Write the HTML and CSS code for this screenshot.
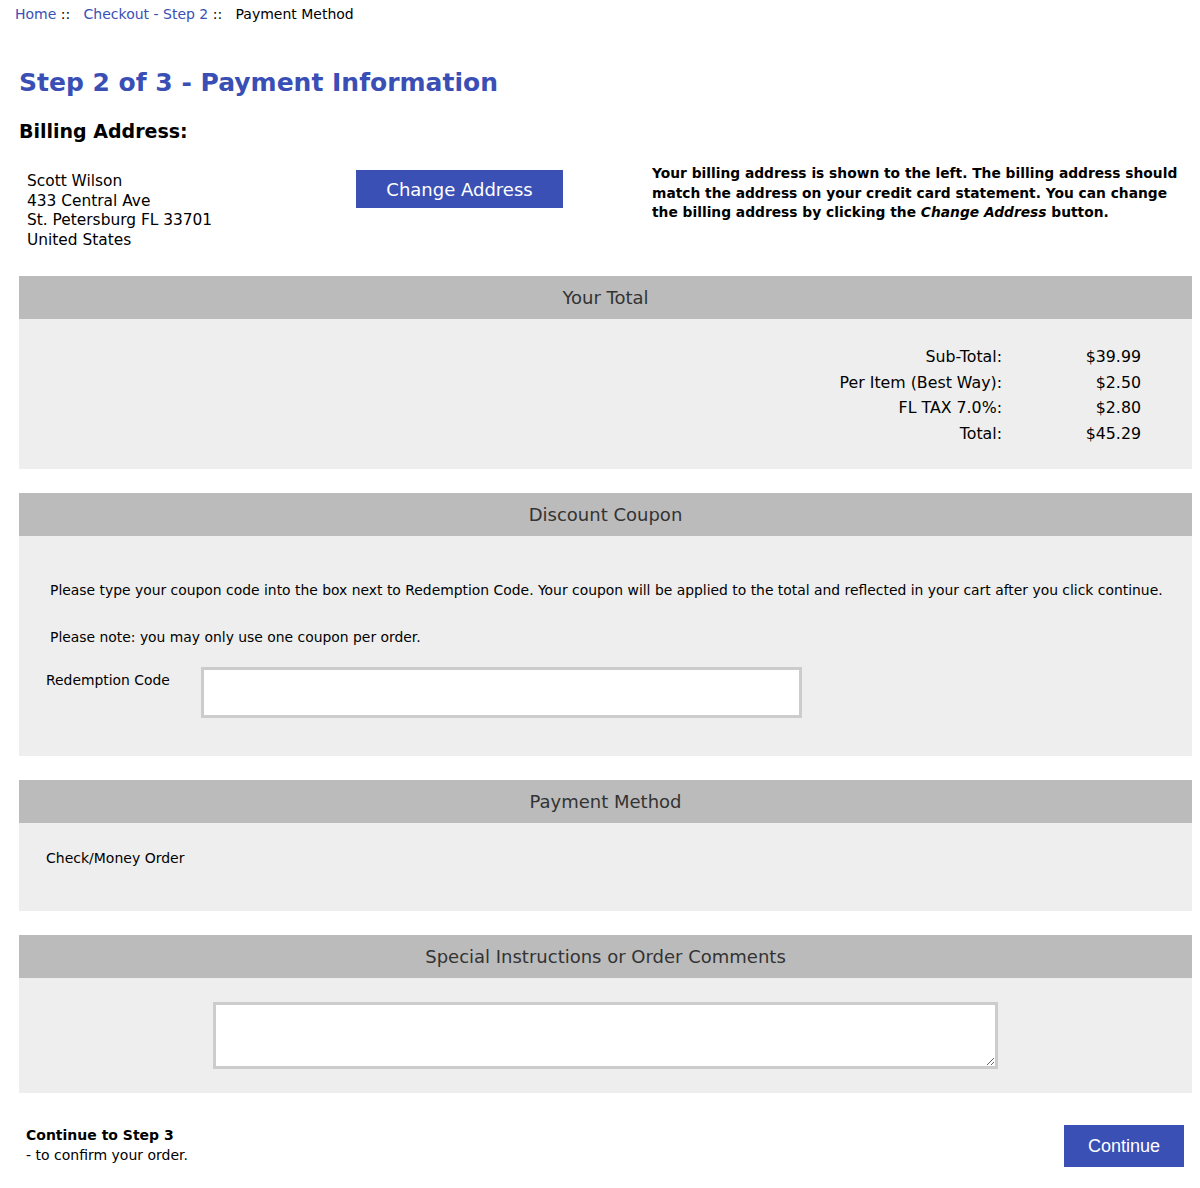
FILE: index.html
```html
<!DOCTYPE html>
<html>
<head>
<meta charset="utf-8">
<link rel="stylesheet" href="styles.css">
</head>
<body>
<div class="breadcrumb"><a href="#">Home</a> ::&nbsp;&nbsp; <a href="#">Checkout - Step 2</a> ::&nbsp;&nbsp; <span>Payment Method</span></div>
<div class="page">
  <h1 class="title">Step 2 of 3 - Payment Information</h1>
  <h2 class="subtitle">Billing Address:</h2>
  <div class="billing">
    <div class="address">Scott Wilson<br>433 Central Ave<br>St. Petersburg FL 33701<br>United States</div>
    <div class="change-wrap"><button class="btn change-btn">Change Address</button></div>
    <div class="billing-note">Your billing address is shown to the left. The billing address should match the address on your credit card statement. You can change the billing address by clicking the <i>Change Address</i> button.</div>
  </div>

  <section class="panel">
    <div class="panel-head">Your Total</div>
    <div class="panel-body totals">
      <div class="row"><span class="lbl">Sub-Total:</span><span class="val">$39.99</span></div>
      <div class="row"><span class="lbl">Per Item (Best Way):</span><span class="val">$2.50</span></div>
      <div class="row"><span class="lbl">FL TAX 7.0%:</span><span class="val">$2.80</span></div>
      <div class="row"><span class="lbl">Total:</span><span class="val">$45.29</span></div>
    </div>
  </section>

  <section class="panel">
    <div class="panel-head">Discount Coupon</div>
    <div class="panel-body coupon">
      <p class="coupon-text">Please type your coupon code into the box next to Redemption Code. Your coupon will be applied to the total and reflected in your cart after you click continue.</p>
      <p class="coupon-text note">Please note: you may only use one coupon per order.</p>
      <div class="redeem">
        <label class="redeem-label">Redemption Code</label>
        <input class="redeem-input" type="text">
      </div>
    </div>
  </section>

  <section class="panel">
    <div class="panel-head">Payment Method</div>
    <div class="panel-body payment">Check/Money Order</div>
  </section>

  <section class="panel">
    <div class="panel-head">Special Instructions or Order Comments</div>
    <div class="panel-body comments"><textarea class="comment-box"></textarea></div>
  </section>

  <div class="continue-bar">
    <div class="continue-text"><b>Continue to Step 3</b><br>- to confirm your order.</div>
    <button class="btn continue-btn">Continue</button>
  </div>
</div>
</body>
</html>
```
FILE: styles.css
```css
* { box-sizing: border-box; }
body {
  margin: 0;
  background: #fff;
  color: #000;
  font-family: "DejaVu Sans", Verdana, sans-serif;
}
a { color: #3a4fb5; text-decoration: none; }
.breadcrumb {
  padding: 6px 0 0 15px;
  font-size: 14px;
  line-height: 16px;
  color: #000;
}
.page {
  padding: 0 8px 0 19px;
}
.title {
  margin: 46px 0 0;
  font-size: 25px;
  line-height: 30px;
  color: #3a4fb5;
  font-weight: bold;
}
.subtitle {
  margin: 21px 0 0;
  font-size: 19px;
  line-height: 24px;
  font-weight: bold;
}
.billing {
  display: grid;
  grid-template-columns: 337px 296px 1fr;
  margin-top: 23px;
  height: 110px;
}
.address {
  padding: 6px 0 0 8px;
  font-size: 15.4px;
  line-height: 19.5px;
}
.btn {
  border: none;
  background: #3a50b5;
  color: #fff;
  cursor: pointer;
}
.change-btn {
  width: 207px;
  height: 38px;
  margin-top: 4px;
  font-family: "DejaVu Sans", Verdana, sans-serif;
  font-size: 18px;
}
.billing-note {
  margin-top: -2px;
  font-size: 13.8px;
  line-height: 19.5px;
  font-weight: bold;
}
.panel {
  margin-bottom: 24px;
  background: #eeeeee;
}
.panel-head {
  height: 43px;
  background: #bbbbbb;
  color: #333;
  font-size: 18px;
  line-height: 43px;
  text-align: center;
}
.totals {
  padding: 28px 51px 20px 0;
  font-size: 15.8px;
}
.totals .row {
  display: flex;
  justify-content: flex-end;
  height: 25.5px;
  line-height: 20px;
}
.totals .lbl { text-align: right; }
.totals .val { width: 139px; text-align: right; }
.coupon {
  padding: 44px 20px 36px 0;
  height: 220px;
  font-size: 13.9px;
}
.coupon-text {
  margin: 0 0 27px 31px;
  line-height: 20px;
}
.coupon-text.note { margin-bottom: 20px; }
.redeem {
  display: flex;
  align-items: flex-start;
  margin-left: 27px;
}
.redeem-label {
  width: 155px;
  padding-top: 5px;
}
.redeem-input {
  width: 601px;
  height: 51px;
  border: 3px solid #cccccc;
  background: #fff;
  outline: none;
}
.payment {
  height: 88px;
  padding: 26px 0 0 27px;
  font-size: 14px;
  line-height: 18px;
}
.comments {
  height: 115px;
  padding-top: 24px;
  display: flex;
  justify-content: center;
}
.comment-box {
  width: 785px;
  height: 67px;
  border: 3px solid #cccccc;
  background: #fff;
  resize: vertical;
}
.continue-bar {
  display: flex;
  justify-content: space-between;
  align-items: flex-start;
  padding: 8px 8px 0 7px;
}
.continue-text {
  padding-top: 0;
  font-size: 14px;
  line-height: 20px;
}
.continue-btn {
  width: 120px;
  height: 42px;
  font-family: "Liberation Sans", Arial, sans-serif;
  font-size: 18px;
}
```
